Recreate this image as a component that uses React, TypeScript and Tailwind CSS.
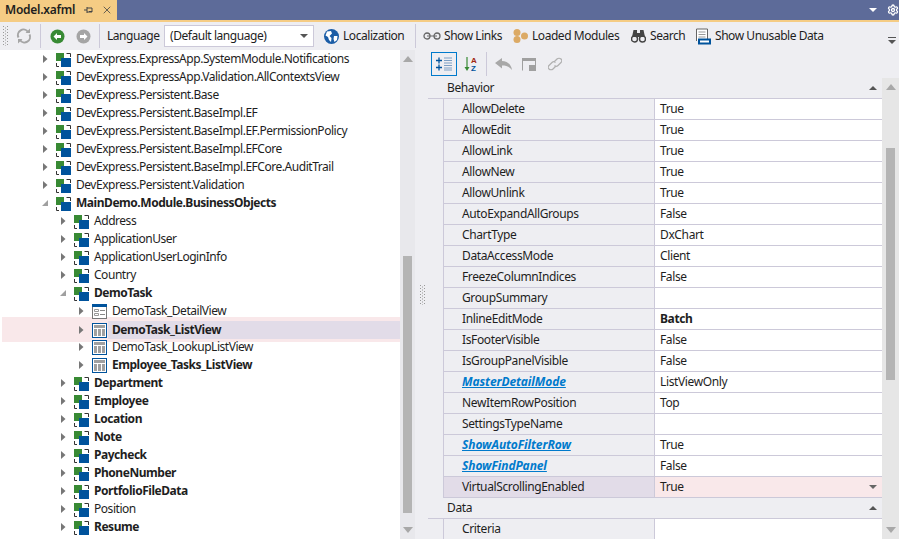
import React from "react";
import { X, Settings } from "lucide-react";

function ModuleIcon() {
  return (
    <svg width="16" height="16" viewBox="0 0 16 16" className="shrink-0">
      <rect x="0" y="2" width="8" height="8" fill="#388a34" />
      <rect x="5" y="7" width="10" height="9" fill="#00539c" />
      <path d="M10.5 2.5H14.5V6M0.5 12V15.5H3" fill="none" stroke="#333" strokeWidth="1" />
    </svg>
  );
}
function ListIcon() {
  return (
    <svg width="16" height="16" viewBox="0 0 16 16" className="shrink-0">
      <rect x="0.5" y="1.5" width="14" height="14" fill="#fff" stroke="#00539c" />
      <rect x="2" y="3" width="11" height="3" fill="#a0a0a0" />
      <path d="M2 7h3v7H2zM6 7h3v7H6zM10 7h3v7h-3z" fill="#a0a0a0" />
    </svg>
  );
}
function DetailIcon() {
  return (
    <svg width="16" height="16" viewBox="0 0 16 16" className="shrink-0">
      <rect x="0.5" y="1.5" width="14" height="14" fill="#fff" stroke="#777" />
      <rect x="0" y="1" width="15" height="3" fill="#00539c" />
      <path d="M2.5 6.5h4v2h-4zM2.5 10.5h4v2h-4z" fill="none" stroke="#999" />
      <path d="M8 7h5v1H8zM8 11h5v1H8z" fill="#888" />
    </svg>
  );
}
function Arrow({ open }: { open?: boolean }) {
  return open ? (
    <svg width="8" height="8" viewBox="0 0 8 8" className="shrink-0"><path d="M7 1V7H1Z" fill="#a0a0a0" /></svg>
  ) : (
    <svg width="8" height="10" viewBox="0 0 8 10" className="shrink-0"><path d="M2 1L6.5 5L2 9Z" fill="#777" /></svg>
  );
}
function Tri({ up, color, small }: { up?: boolean; color: string; small?: boolean }) {
  return (
    <svg width={small ? 8 : 10} height={small ? 4 : 6} viewBox="0 0 10 6" preserveAspectRatio="none" className="shrink-0">
      <path d={up ? "M5 0L10 6H0Z" : "M0 0H10L5 6Z"} fill={color} />
    </svg>
  );
}

type T = { t: string; l: 0 | 1 | 2; b?: boolean; open?: boolean; i?: "m" | "l" | "d"; sel?: boolean };
const tree: T[] = [
  { t: "DevExpress.ExpressApp.SystemModule.Notifications", l: 0 },
  { t: "DevExpress.ExpressApp.Validation.AllContextsView", l: 0 },
  { t: "DevExpress.Persistent.Base", l: 0 },
  { t: "DevExpress.Persistent.BaseImpl.EF", l: 0 },
  { t: "DevExpress.Persistent.BaseImpl.EF.PermissionPolicy", l: 0 },
  { t: "DevExpress.Persistent.BaseImpl.EFCore", l: 0 },
  { t: "DevExpress.Persistent.BaseImpl.EFCore.AuditTrail", l: 0 },
  { t: "DevExpress.Persistent.Validation", l: 0 },
  { t: "MainDemo.Module.BusinessObjects", l: 0, b: true, open: true },
  { t: "Address", l: 1 },
  { t: "ApplicationUser", l: 1 },
  { t: "ApplicationUserLoginInfo", l: 1 },
  { t: "Country", l: 1 },
  { t: "DemoTask", l: 1, b: true, open: true },
  { t: "DemoTask_DetailView", l: 2, i: "d" },
  { t: "DemoTask_ListView", l: 2, i: "l", b: true, sel: true },
  { t: "DemoTask_LookupListView", l: 2, i: "l" },
  { t: "Employee_Tasks_ListView", l: 2, i: "l", b: true },
  { t: "Department", l: 1, b: true },
  { t: "Employee", l: 1, b: true },
  { t: "Location", l: 1, b: true },
  { t: "Note", l: 1, b: true },
  { t: "Paycheck", l: 1, b: true },
  { t: "PhoneNumber", l: 1, b: true },
  { t: "PortfolioFileData", l: 1, b: true },
  { t: "Position", l: 1 },
  { t: "Resume", l: 1, b: true },
];

const indent = { 0: "pl-[41px]", 1: "pl-[59px]", 2: "pl-[77px]" };
const indentSel = { 0: "pl-[39px]", 1: "pl-[57px]", 2: "pl-[75px]" };

function TreeRow({ r }: { r: T }) {
  const inner = (
    <>
      <span className="flex w-[15px] shrink-0 items-center"><Arrow open={r.open} /></span>
      {r.i === "l" ? <ListIcon /> : r.i === "d" ? <DetailIcon /> : <ModuleIcon />}
    </>
  );
  if (r.sel) {
    return (
      <div className={`ml-[2px] -mt-[3px] -mb-[4px] flex h-[25px] items-center bg-[#f9e8ea] ${indentSel[r.l]}`}>
        {inner}
        <span className="flex h-[18px] flex-1 items-center bg-[#e2dce8] pl-[4px] font-bold">{r.t}</span>
      </div>
    );
  }
  return (
    <div className={`flex h-[18px] items-center ${indent[r.l]}`}>
      {inner}
      <span className={`ml-[4px] whitespace-nowrap ${r.b ? "font-bold" : ""}`}>{r.t}</span>
    </div>
  );
}

type P = { n: string; v: string; link?: boolean; vb?: boolean; sel?: boolean };
const props: P[] = [
  { n: "AllowDelete", v: "True" },
  { n: "AllowEdit", v: "True" },
  { n: "AllowLink", v: "True" },
  { n: "AllowNew", v: "True" },
  { n: "AllowUnlink", v: "True" },
  { n: "AutoExpandAllGroups", v: "False" },
  { n: "ChartType", v: "DxChart" },
  { n: "DataAccessMode", v: "Client" },
  { n: "FreezeColumnIndices", v: "False" },
  { n: "GroupSummary", v: "" },
  { n: "InlineEditMode", v: "Batch", vb: true },
  { n: "IsFooterVisible", v: "False" },
  { n: "IsGroupPanelVisible", v: "False" },
  { n: "MasterDetailMode", v: "ListViewOnly", link: true },
  { n: "NewItemRowPosition", v: "Top" },
  { n: "SettingsTypeName", v: "" },
  { n: "ShowAutoFilterRow", v: "True", link: true },
  { n: "ShowFindPanel", v: "False", link: true },
  { n: "VirtualScrollingEnabled", v: "True", sel: true },
];

function PropRow({ p }: { p: P }) {
  return (
    <div className="ml-[15px] flex h-[21px] border-b border-[#ccc9d9] border-l">
      <div className={`flex w-[211px] shrink-0 items-center border-r border-[#ccc9d9] pl-[18px] ${p.sel ? "bg-[#e2dce8]" : "bg-[#eeeef2]"}`}>
        {p.link ? <span className="font-bold italic tracking-[-0.1px] text-[#007acc] underline">{p.n}</span> : <span>{p.n}</span>}
      </div>
      <div className={`flex flex-1 items-center justify-between pl-[5px] pr-[5px] ${p.sel ? "bg-[#f9e8ea]" : "bg-white"} ${p.vb ? "font-bold" : ""}`}>
        <span>{p.v}</span>
        {p.sel && <Tri small color="#666" />}
      </div>
    </div>
  );
}

function GroupHeader({ t }: { t: string }) {
  return (
    <div className="flex h-[21px] items-center justify-between border-b border-[#ccc9d9] pl-[19px] pr-[5px]">
      <span>{t}</span>
      <Tri small up color="#555" />
    </div>
  );
}

function Sep() {
  return <div className="h-[24px] w-[1px] shrink-0 bg-[#ccc9d9]" />;
}

function Grip() {
  return (
    <svg width="6" height="20" viewBox="0 0 6 20" className="shrink-0">
      {[0, 1, 2, 3, 4, 5, 6].map((i) => (
        <g key={i} fill="#999">
          <rect x="0" y={i * 3} width="1" height="1" />
          <rect x="4" y={i * 3} width="1" height="1" />
          <rect x="2" y={i * 3 + 1.5} width="1" height="1" />
        </g>
      ))}
    </svg>
  );
}

export default function App() {
  return (
    <div className="flex h-[539px] w-[899px] flex-col overflow-hidden bg-[#eeeef2] font-['Noto_Sans','Open_Sans',sans-serif] text-[12px] leading-none tracking-[-0.46px] text-[#1e1e1e]">
      {/* Tab strip */}
      <div className="flex h-[22px] shrink-0 border-b-2 border-[#f5cc84] bg-[#5d6b99]">
        <div className="flex h-[20px] w-[117px] items-center bg-[#f5cc84] pl-[5px]">
          <span className="w-[79px] text-[12px] font-semibold tracking-[-0.25px]">Model.xafml</span>
          <svg width="10" height="10" viewBox="0 0 10 10" className="shrink-0">
            <path d="M0 5H3M3 2V8M3 3H8V7H3M5 6.5H8" fill="none" stroke="#444" />
          </svg>
          <X size={12} strokeWidth={1.6} color="#444" className="ml-[7px]" />
        </div>
        <div className="flex flex-1 items-center justify-end">
          <Tri small color="#fff" />
          <Settings size={12} strokeWidth={2.6} color="#fff" className="ml-[10px]" />
        </div>
      </div>

      {/* Main toolbar */}
      <div className="flex h-[28px] shrink-0 items-center pl-[3px] tracking-[-0.45px]">
        <Grip />
        <svg width="16" height="16" viewBox="0 0 16 16" className="ml-[7px] shrink-0">
          <path d="M2.5 9.5A5.5 5.5 0 0 1 12 4M13.5 6.5A5.5 5.5 0 0 1 4 12" fill="none" stroke="#a5a5a5" strokeWidth="2" />
          <path d="M9.5 5H14V0.5ZM6.5 11H2V15.5Z" fill="#a5a5a5" />
        </svg>
        <div className="ml-[8px]"><Sep /></div>
        <svg width="15" height="15" viewBox="0 0 15 15" className="ml-[9px] shrink-0">
          <circle cx="7.5" cy="7.5" r="7" fill="#388a34" />
          <path d="M3.5 7.5L7 4V6H11V9H7V11Z" fill="#fff" />
        </svg>
        <svg width="15" height="15" viewBox="0 0 15 15" className="ml-[11px] shrink-0">
          <circle cx="7.5" cy="7.5" r="7" fill="#a5a5a5" />
          <path d="M11.5 7.5L8 4V6H4V9H8V11Z" fill="#fff" />
        </svg>
        <div className="ml-[8px]"><Sep /></div>
        <span className="ml-[7px] w-[52px] whitespace-nowrap">Language</span>
        <div className="ml-[5px] flex h-[22px] w-[150px] shrink-0 items-center justify-between border border-[#ccc9d9] bg-white pl-[5px] pr-[5px]">
          <span className="whitespace-nowrap">(Default language)</span>
          <Tri small color="#555" />
        </div>
        <svg width="15" height="15" viewBox="0 0 15 15" className="ml-[10px] shrink-0">
          <circle cx="7.5" cy="7.5" r="7.5" fill="#1b5da6" />
          <path d="M3 2.5L7 2L8 4.5L5.5 7L7.5 9L7 13L5 11L4 8L1.5 6.5ZM10 7L13.5 7L13 11L10.5 13L9.5 10Z" fill="#fff" />
        </svg>
        <span className="ml-[4px] w-[64px] whitespace-nowrap">Localization</span>
        <div className="ml-[8px]"><Sep /></div>
        <svg width="18" height="10" viewBox="0 0 18 10" className="ml-[7px] shrink-0">
          <circle cx="4" cy="5" r="3" fill="none" stroke="#666" strokeWidth="1.3" />
          <circle cx="14" cy="5" r="3" fill="none" stroke="#666" strokeWidth="1.3" />
          <path d="M4 5H14" stroke="#666" />
        </svg>
        <span className="ml-[3px] w-[60px] whitespace-nowrap">Show Links</span>
        <svg width="16" height="14" viewBox="0 0 16 14" className="ml-[9px] shrink-0">
          <circle cx="4" cy="3.5" r="3.5" fill="#dcaa65" />
          <circle cx="4" cy="10.5" r="3.5" fill="#dcaa65" />
          <circle cx="11.5" cy="7" r="3.5" fill="#dcaa65" />
        </svg>
        <span className="ml-[3px] w-[90px] whitespace-nowrap">Loaded Modules</span>
        <svg width="15" height="14" viewBox="0 0 15 14" className="ml-[9px] shrink-0">
          <circle cx="3.5" cy="10" r="3" fill="none" stroke="#444" strokeWidth="1.4" />
          <circle cx="11.5" cy="10" r="3" fill="none" stroke="#444" strokeWidth="1.4" />
          <path d="M2.5 1H6V8H1ZM9 1H12.5L14 8H9ZM6 4H9V8H6Z" fill="#444" />
        </svg>
        <span className="ml-[4px] w-[37px] whitespace-nowrap">Search</span>
        <svg width="16" height="17" viewBox="0 0 16 17" className="ml-[8px] shrink-0">
          <path d="M1.5 13V1H12.5V11" fill="#fff" stroke="#666" />
          <path d="M3.5 4H10.5M3.5 6.5H10.5M3.5 9H10.5" stroke="#999" />
          <rect x="3" y="10.5" width="13" height="6" fill="#00539c" />
          <rect x="5" y="12.5" width="9" height="2" fill="#fff" />
        </svg>
        <span className="ml-[4px] whitespace-nowrap">Show Unusable Data</span>
        <div className="flex flex-1 flex-col items-end pr-[3px] pt-[8px]">
          <div className="flex flex-col items-center gap-[2px]">
            <div className="h-[1px] w-[8px] bg-[#555]" />
            <Tri small color="#555" />
          </div>
        </div>
      </div>

      {/* Body */}
      <div className="flex min-h-0 flex-1">
        {/* Tree */}
        <div className="w-[400px] shrink-0 overflow-hidden bg-white">
          {tree.map((r) => <TreeRow key={r.t} r={r} />)}
        </div>
        {/* Tree scrollbar */}
        <div className="flex w-[15px] shrink-0 flex-col items-center justify-between bg-[#e8e8ec] py-[6px]">
          <Tri up color="#a8a8a8" />
          <div className="mt-[194px] w-[9px] flex-1 bg-[#b4b4b4]" />
          <div className="mt-[14px]"><Tri color="#a8a8a8" /></div>
        </div>
        {/* Splitter */}
        <div className="flex w-[13px] shrink-0 items-center justify-center pl-[2px]">
          <Grip />
        </div>
        {/* Properties */}
        <div className="flex min-w-0 flex-1 flex-col tracking-[-0.37px]">
          <div className="flex h-[28px] shrink-0 items-center">
            <div className="ml-[3px] flex h-[24px] w-[26px] items-center justify-center border border-[#007acc]">
              <svg width="16" height="14" viewBox="0 0 16 14">
                <path d="M0 3.5H6M3 0.5V6.5M0 10.5H6M3 7.5V13.5" stroke="#00539c" strokeWidth="1.3" fill="none" />
                <path d="M8 1H16M8 3.5H16M8 6H16M8 8.5H16M8 11H16M8 13H16" stroke="#7d9fc4" />
              </svg>
            </div>
            <svg width="14" height="16" viewBox="0 0 14 16" className="ml-[7px] shrink-0">
              <path d="M3 1V13" stroke="#388a34" strokeWidth="1.2" />
              <path d="M0.5 11L3 15L5.5 11Z" fill="#388a34" />
              <text x="7" y="7" fontSize="8" fontWeight="700" fill="#a1260d" fontFamily="Liberation Sans" letterSpacing="0">A</text>
              <text x="7" y="15" fontSize="8" fontWeight="700" fill="#00539c" fontFamily="Liberation Sans" letterSpacing="0">Z</text>
            </svg>
            <div className="ml-[8px]"><Sep /></div>
            <svg width="17" height="12" viewBox="0 0 17 12" className="ml-[8px] shrink-0">
              <path d="M0 5L7 0V3C12 3 16 6 17 12C14 8.5 11 7.5 7 7.5V10.5Z" fill="#a8a8a8" />
            </svg>
            <svg width="14" height="13" viewBox="0 0 14 13" className="ml-[10px] shrink-0">
              <path d="M0.5 12.5V1.5H13.5V7" fill="none" stroke="#a0a0a0" />
              <rect x="0" y="0" width="14" height="3" fill="#a0a0a0" />
              <rect x="7" y="7" width="7" height="6" fill="#a0a0a0" />
            </svg>
            <svg width="14" height="14" viewBox="0 0 14 14" className="ml-[12px] shrink-0">
              <path d="M6 5L9 2C10 1 12 1 13 2C14 3 14 4.5 13 5.5L10 8.5C9 9.5 7.5 9.5 6.5 8.5M8 9L5 12C4 13 2 13 1 12C0 11 0 9.5 1 8.5L4 5.5C5 4.5 6.5 4.5 7.5 5.5" fill="none" stroke="#b0b0b0" strokeWidth="1.2" />
            </svg>
          </div>
          <div className="flex min-h-0 flex-1">
            <div className="min-w-0 flex-1 overflow-hidden">
              <GroupHeader t="Behavior" />
              {props.map((p) => <PropRow key={p.n} p={p} />)}
              <GroupHeader t="Data" />
              <PropRow p={{ n: "Criteria", v: "" }} />
            </div>
            <div className="flex w-[17px] shrink-0 flex-col items-center bg-[#e6e6e6] py-[6px]">
              <Tri up color="#a8a8a8" />
              <div className="mt-[58px] h-[232px] w-[9px] bg-[#b4b4b4]" />
              <div className="mt-auto"><Tri color="#a8a8a8" /></div>
            </div>
          </div>
        </div>
      </div>
    </div>
  );
}
